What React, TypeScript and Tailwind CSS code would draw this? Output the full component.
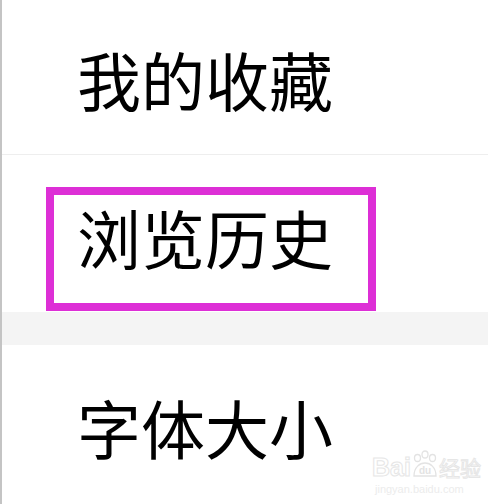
import React from 'react';

const cjk = { fontFamily: '"Noto Sans CJK SC", "Noto Sans", sans-serif' };

const Watermark: React.FC = () => (
  <div className="absolute left-[370px] top-[450px] flex flex-col items-start" style={cjk}>
    <div className="flex items-end">
      <span
        className="text-[25px] leading-[26px] font-bold text-white"
        style={{ fontFamily: '"Liberation Sans", sans-serif', WebkitTextStroke: '1px #e6e6e6' }}
      >
        Bai
      </span>
      <svg width="28" height="30" viewBox="0 0 28 30">
        <g fill="none" stroke="#e3e3e3" strokeWidth="1.3">
          <ellipse cx="6.5" cy="8" rx="3" ry="3.5" />
          <ellipse cx="14" cy="4.5" rx="3" ry="3.5" />
          <ellipse cx="21.5" cy="8" rx="3" ry="3.5" />
          <path d="M3 26 C3 17 9 13 14 13 C19 13 25 17 25 26 Z" />
        </g>
        <text x="14" y="24" textAnchor="middle" fontSize="10" fill="#e3e3e3" fontFamily="Liberation Sans" fontWeight="bold">du</text>
      </svg>
      <span className="text-[21px] leading-[26px] text-white" style={{ WebkitTextStroke: '1px #e6e6e6' }}>经验</span>
    </div>
    <span className="text-[11px] leading-[12px] mt-[3px] pl-[3px] text-[#ececec]" style={{ fontFamily: '"Liberation Sans", sans-serif' }}>
      jingyan.baidu.com
    </span>
  </div>
);

export default function App() {
  return (
    <div className="relative w-[488px] h-[504px] overflow-hidden bg-white border-l-2 border-[#c4c4c4] text-black" style={cjk}>
      <div className="h-[155px] pt-[46px] pl-[75px] border-b border-[#eeeeee]">
        <div className="text-[64px] leading-[64px]">我的收藏</div>
      </div>
      <div className="h-[157px] pt-[32px] pl-[44px]">
        <div className="w-[330px] h-[124px] border-[8px] border-[#dd2fd6] pt-[9px] pl-[23px]">
          <div className="text-[64px] leading-[64px]">浏览历史</div>
        </div>
      </div>
      <div className="h-[33px] bg-[#f4f4f4]" />
      <div className="pt-[49px] pl-[75px]">
        <div className="text-[64px] leading-[64px]">字体大小</div>
      </div>
      <Watermark />
    </div>
  );
}
